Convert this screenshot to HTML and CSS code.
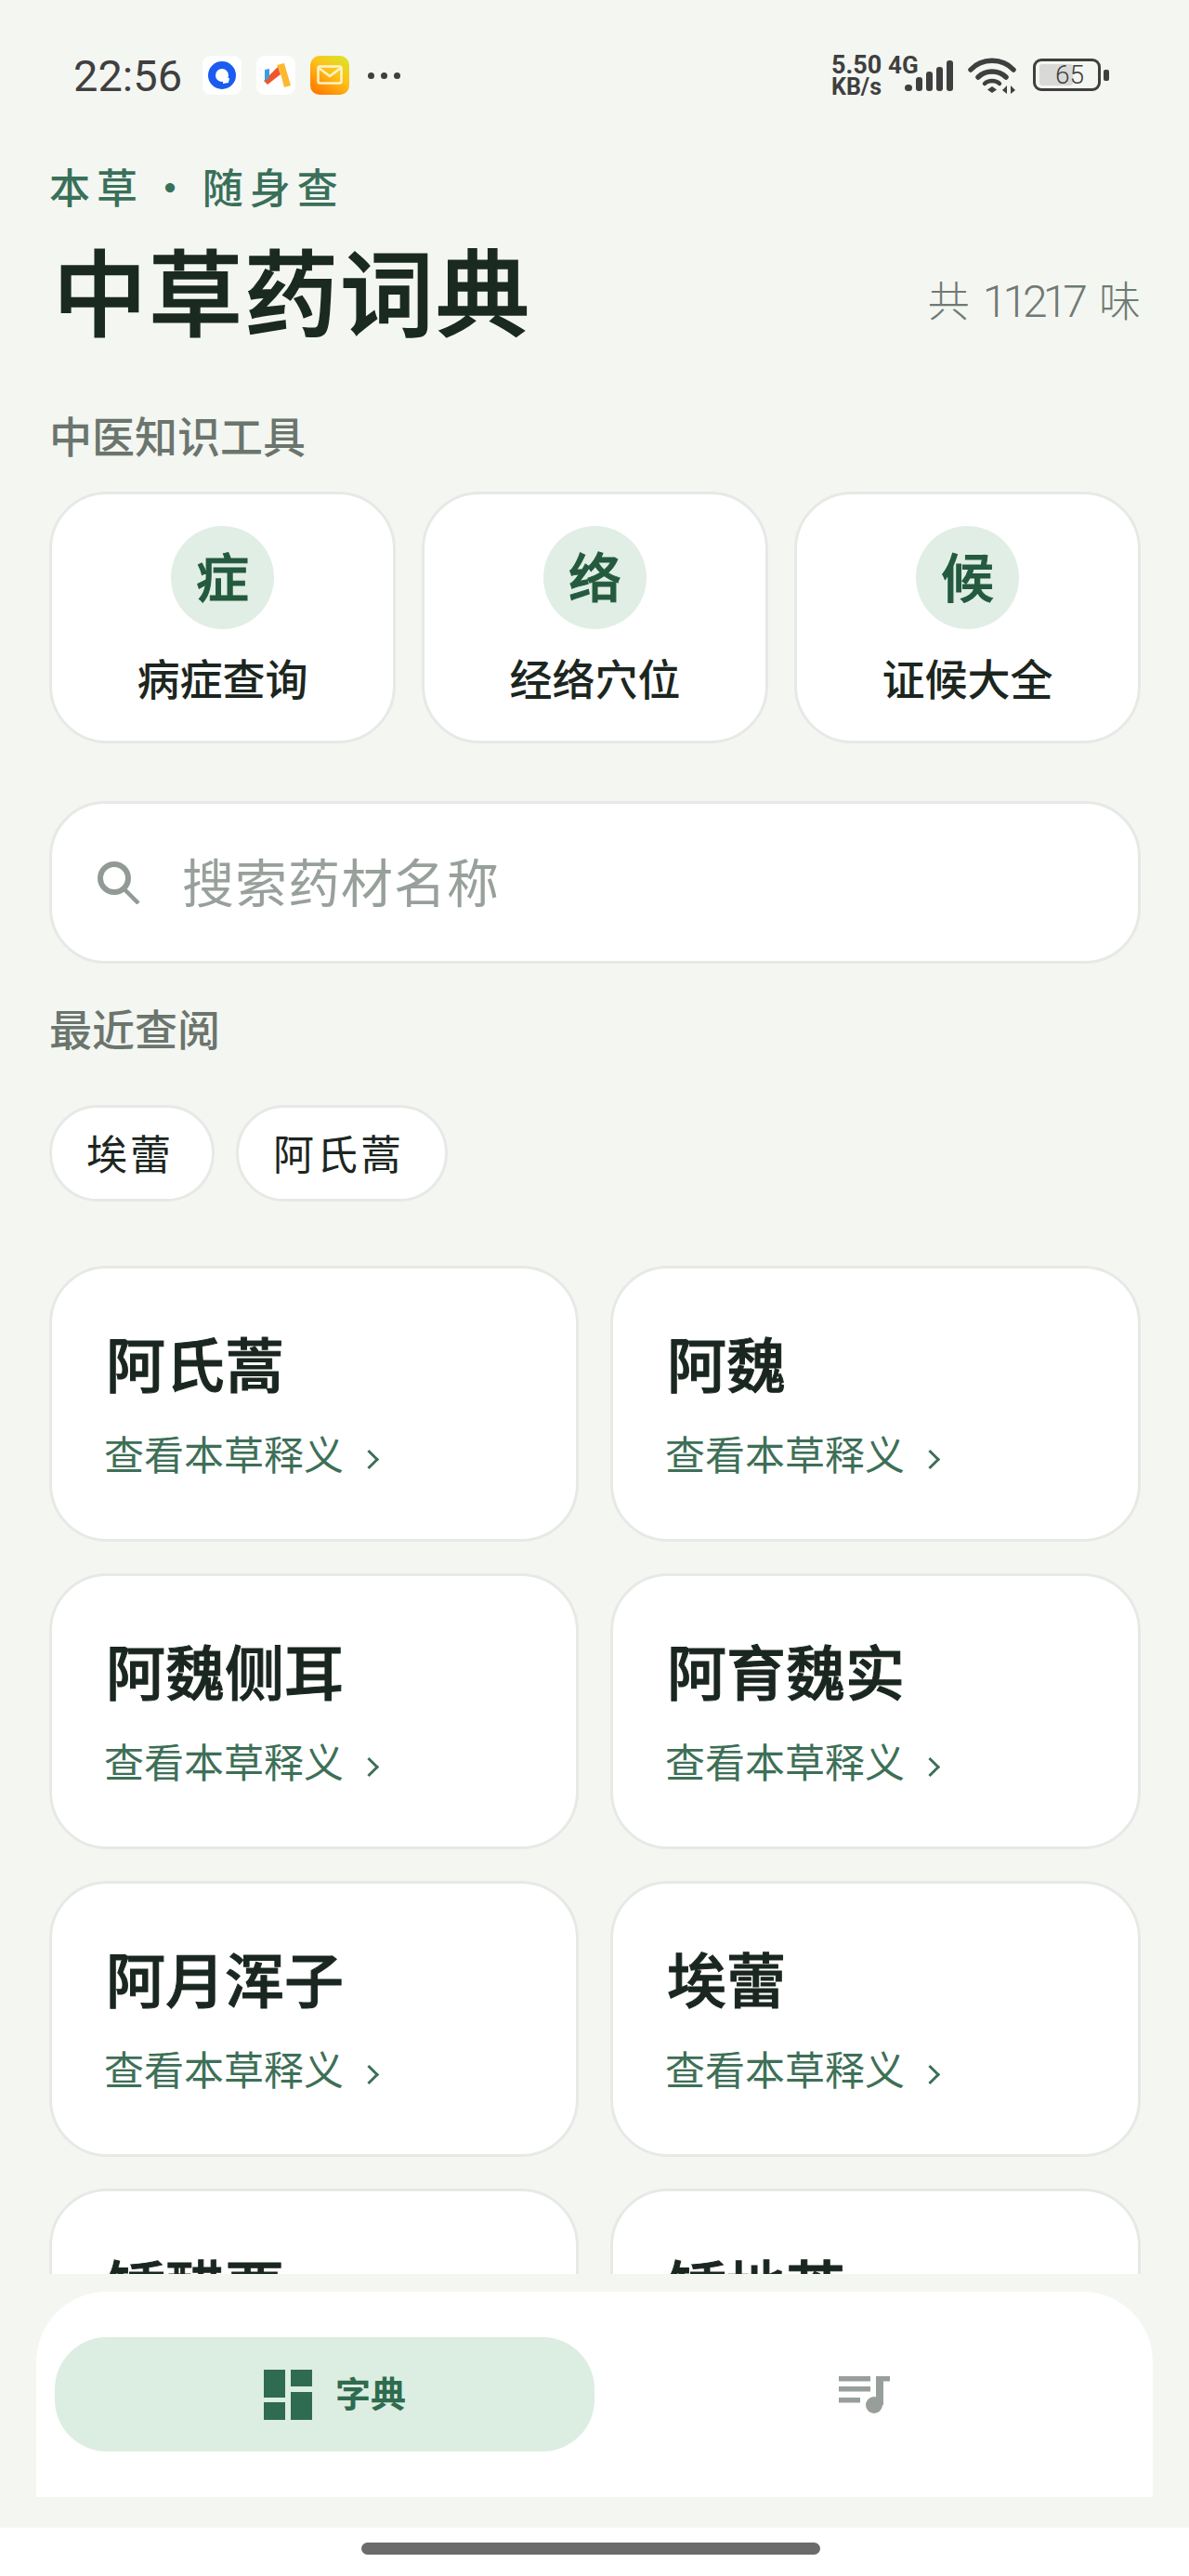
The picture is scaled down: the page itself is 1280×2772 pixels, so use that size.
FILE: index.html
```html
<!DOCTYPE HTML>
<html>

<head>
    <meta name="viewport" content="width=device-width, initial-scale=1">
    <title>中草药词典</title>
    <link rel="stylesheet" href="styles.css">
</head>

<body>
    <div class="statusBar">
        <div class="statusLeft">
            <span class="clock">22:56</span>
            <svg class="appIcon" viewBox="0 0 42 42">
                <rect width="42" height="42" rx="9" fill="#fff" />
                <circle cx="21" cy="21" r="15" fill="#1a5cf0" />
                <circle cx="21" cy="21" r="7" fill="#fff" />
                <path d="M22 24l7 0-1 5-6 1z" fill="#fff" />
            </svg>
            <svg class="appIcon" viewBox="0 0 42 42">
                <rect width="42" height="42" rx="9" fill="#fff" />
                <path d="M22 10l8-2 7 24-7 2-4-15z" fill="#fdb92e" />
                <path d="M8 27l15-15 3 8-14 11z" fill="#f0562a" />
                <path d="M9 15l5-1 0 9-5 5z" fill="#3b9ede" />
            </svg>
            <svg class="appIcon" viewBox="0 0 42 42">
                <defs>
                    <linearGradient id="mailFill" x1="0.9" y1="0" x2="0.2" y2="1">
                        <stop offset="0" stop-color="#d8e52a" />
                        <stop offset="0.45" stop-color="#fdc21a" />
                        <stop offset="1" stop-color="#ff7a00" />
                    </linearGradient>
                </defs>
                <rect width="42" height="42" rx="10" fill="url(#mailFill)" />
                <rect x="8.5" y="11.5" width="25" height="18" rx="2" fill="none" stroke="#fff4c8" stroke-width="2.5" />
                <path d="M9 13l12 9 12-9" fill="none" stroke="#fff4c8" stroke-width="2.5" />
            </svg>
            <span class="moreDots"><i></i><i></i><i></i></span>
        </div>
        <div class="statusRight">
            <div class="netSpeed">
                <span>5.50</span>
                <span class="netUnit">KB/s</span>
            </div>
            <div class="signal">
                <span class="netType">4G</span>
                <svg class="signalBars" viewBox="0 0 52 34">
                    <rect x="0" y="26" width="8" height="7" rx="3.5" fill="#3f3f3f" />
                    <rect x="12" y="18" width="7" height="15" rx="3" fill="#3f3f3f" />
                    <rect x="23" y="12" width="7" height="21" rx="3" fill="#3f3f3f" />
                    <rect x="34" y="7" width="7" height="26" rx="3" fill="#3f3f3f" />
                    <rect x="45" y="0" width="7" height="33" rx="3" fill="#3f3f3f" />
                </svg>
            </div>
            <svg class="wifi" viewBox="0 0 52 39">
                <path d="M3 13C15 0 37 0 49 13" fill="none" stroke="#3f3f3f" stroke-width="5.500" stroke-linecap="round" />
                <path d="M11 21C19 13 33 13 41 21" fill="none" stroke="#3f3f3f" stroke-width="5.500" stroke-linecap="round" />
                <path d="M18 28C22 24 30 24 34 28" fill="none" stroke="#3f3f3f" stroke-width="4.500" stroke-linecap="round" />
                <path d="M26 31l5 3.500-5 3.500-5-3.500z" fill="#3f3f3f" />
                <path d="M42 30v9l-5-4zM46 30v9l5-4z" fill="#3f3f3f" />
            </svg>
            <div class="battery">
                <div class="batteryBody">
                    <div class="batteryFill"></div>
                    <span class="batteryText">65</span>
                </div>
                <div class="batteryTip"></div>
            </div>
        </div>
    </div>

    <div class="page">
        <p class="eyebrow">本草 · 随身查</p>
        <div class="titleRow">
            <h1>中草药词典</h1>
            <span class="total">共<span class="totalNum">11217</span>味</span>
        </div>

        <p class="sectionTitle">中医知识工具</p>
        <div class="toolRow">
            <div class="toolCard">
                <div class="toolBadge">症</div>
                <div class="toolName">病症查询</div>
            </div>
            <div class="toolCard">
                <div class="toolBadge">络</div>
                <div class="toolName">经络穴位</div>
            </div>
            <div class="toolCard">
                <div class="toolBadge">候</div>
                <div class="toolName">证候大全</div>
            </div>
        </div>

        <div class="searchBox">
            <svg class="searchIcon" viewBox="0 0 46 46">
                <circle cx="18" cy="18" r="15" fill="none" stroke="#919a94" stroke-width="6" />
                <path d="M29 30l15 15" fill="none" stroke="#919a94" stroke-width="4.500" />
            </svg>
            <span class="searchHint">搜索药材名称</span>
        </div>

        <p class="recentTitle">最近查阅</p>
        <div class="chipRow">
            <div class="chip">埃蕾</div>
            <div class="chip">阿氏蒿</div>
        </div>

        <div class="herbViewport">
            <div class="herbGrid">
                <div class="herbCard">
                    <div class="herbName">阿氏蒿</div>
                    <div class="herbLink">查看本草释义<i class="chevron"></i></div>
                </div>
                <div class="herbCard">
                    <div class="herbName">阿魏</div>
                    <div class="herbLink">查看本草释义<i class="chevron"></i></div>
                </div>
                <div class="herbCard">
                    <div class="herbName">阿魏侧耳</div>
                    <div class="herbLink">查看本草释义<i class="chevron"></i></div>
                </div>
                <div class="herbCard">
                    <div class="herbName">阿育魏实</div>
                    <div class="herbLink">查看本草释义<i class="chevron"></i></div>
                </div>
                <div class="herbCard">
                    <div class="herbName">阿月浑子</div>
                    <div class="herbLink">查看本草释义<i class="chevron"></i></div>
                </div>
                <div class="herbCard">
                    <div class="herbName">埃蕾</div>
                    <div class="herbLink">查看本草释义<i class="chevron"></i></div>
                </div>
                <div class="herbCard">
                    <div class="herbName">矮醋栗</div>
                    <div class="herbLink">查看本草释义<i class="chevron"></i></div>
                </div>
                <div class="herbCard">
                    <div class="herbName">矮地茶</div>
                    <div class="herbLink">查看本草释义<i class="chevron"></i></div>
                </div>
            </div>
        </div>
    </div>

    <div class="tabBar">
        <div class="tab tabActive">
            <svg class="tabGridIcon" viewBox="0 0 52 54">
                <rect x="0" y="0" width="23" height="30" fill="#2f6b4f" />
                <rect x="0" y="35" width="23" height="19" fill="#2f6b4f" />
                <rect x="29" y="0" width="23" height="18" fill="#2f6b4f" />
                <rect x="29" y="24" width="23" height="30" fill="#2f6b4f" />
            </svg>
            <span class="tabLabel">字典</span>
        </div>
        <div class="tab">
            <svg class="tabMusicIcon" viewBox="0 0 55 41">
                <rect x="0" y="1" width="34" height="5.500" fill="#989f9b" />
                <rect x="0" y="12" width="34" height="5.500" fill="#989f9b" />
                <rect x="0" y="24" width="23" height="5.500" fill="#989f9b" />
                <path d="M40 1h15v5.500h-7v25.500h-8z" fill="#989f9b" />
                <circle cx="38" cy="32" r="9" fill="#989f9b" />
            </svg>
        </div>
    </div>

    <div class="gestureArea">
        <div class="homeBar"></div>
    </div>
</body>

</html>
```

FILE: styles.css
```css
html {
    font-family: "Noto Sans CJK SC", "Noto Sans", sans-serif;
}

body {
    margin: 0;
    width: 1280px;
    height: 2772px;
    overflow: hidden;
    background: #f4f6f2;
    color: #1c2620;
}

p {
    margin: 0;
}

/* Status bar */
.statusBar {
    height: 160px;
    padding: 60px 86px 0 79px;
    box-sizing: border-box;
    display: flex;
    justify-content: space-between;
    align-items: flex-start;
    color: #3f3f3f;
}

.statusLeft {
    display: flex;
    align-items: center;
    height: 42px;
}

.clock {
    font-family: Roboto, sans-serif;
    font-size: 47px;
    width: 139px;
}

.appIcon {
    width: 42px;
    height: 42px;
    margin-right: 16px;
}

.moreDots {
    display: flex;
    gap: 7px;
    margin-left: 4px;
}

.moreDots i {
    width: 7px;
    height: 7px;
    border-radius: 50%;
    background: #3f3f3f;
}

.statusRight {
    display: flex;
    align-items: flex-start;
}

.netSpeed {
    display: flex;
    flex-direction: column;
    font-family: Roboto, sans-serif;
    font-size: 27px;
    font-weight: 700;
    line-height: 23px;
    margin-top: -1px;
    width: 61px;
}

.netUnit {
    font-size: 25px;
}

.signal {
    position: relative;
    width: 52px;
    height: 34px;
    margin-left: 18px;
    margin-top: 5px;
}

.netType {
    position: absolute;
    left: -18px;
    top: -8px;
    font-family: Roboto, sans-serif;
    font-size: 26px;
    font-weight: 700;
    line-height: 26px;
}

.signalBars {
    display: block;
    width: 52px;
    height: 34px;
}

.wifi {
    width: 52px;
    height: 39px;
    margin-left: 16px;
    margin-top: 2px;
}

.battery {
    display: flex;
    align-items: center;
    margin-left: 18px;
    margin-top: 3px;
}

.batteryBody {
    position: relative;
    width: 73px;
    height: 35px;
    box-sizing: border-box;
    border: 3px solid #3f3f3f;
    border-radius: 9px;
    display: flex;
    align-items: center;
    justify-content: center;
}

.batteryFill {
    position: absolute;
    left: 4px;
    top: 3px;
    bottom: 3px;
    width: 36px;
    background: #d9dad8;
    border-radius: 3px;
}

.batteryText {
    position: relative;
    font-family: Roboto, sans-serif;
    font-size: 28px;
    font-weight: 300;
    line-height: 30px;
    margin-left: 6px;
}

.batteryTip {
    width: 6px;
    height: 12px;
    margin-left: 3px;
    background: #3f3f3f;
    border-radius: 2px;
}

/* Main page */
.page {
    padding: 0 52px 0 53px;
}

.eyebrow {
    font-size: 44px;
    font-weight: 500;
    line-height: 62px;
    letter-spacing: 7px;
    word-spacing: -11px;
    color: #39705a;
    margin-top: 9px;
}

.titleRow {
    display: flex;
    justify-content: space-between;
    align-items: center;
    margin-top: 19px;
    padding-left: 4px;
}

h1 {
    margin: 0;
    font-size: 101px;
    font-weight: 500;
    line-height: 120px;
    letter-spacing: 2px;
    -webkit-text-stroke: 1.5px #1a2a20;
    color: #1a2a20;
}

.total {
    font-size: 45px;
    font-weight: 300;
    color: #6f7a72;
    line-height: 60px;
    margin: 27px 0 0 0;
}

.totalNum {
    font-family: Roboto, sans-serif;
    font-size: 48px;
    letter-spacing: -5px;
    margin: 0 17px 0 14px;
}

.sectionTitle {
    font-size: 46px;
    font-weight: 500;
    line-height: 60px;
    color: #6b756d;
    margin-top: 67px;
}

.toolRow {
    display: grid;
    grid-template-columns: 1fr 1fr 1fr;
    gap: 28px;
    margin-top: 32px;
}

.toolCard {
    height: 271px;
    box-sizing: border-box;
    background: #fff;
    border: 3px solid #e6e9e5;
    border-radius: 62px;
    padding-top: 34px;
    display: flex;
    flex-direction: column;
    align-items: center;
}

.toolBadge {
    width: 111px;
    height: 111px;
    border-radius: 50%;
    background: #e1eee5;
    color: #245a3e;
    font-size: 57px;
    font-weight: 500;
    -webkit-text-stroke: 1px #245a3e;
    line-height: 105px;
    text-align: center;
}

.toolName {
    font-size: 46px;
    font-weight: 500;
    line-height: 60px;
    margin-top: 21px;
}

.searchBox {
    height: 175px;
    box-sizing: border-box;
    margin-top: 62px;
    background: #fff;
    border: 3px solid #e6e9e5;
    border-radius: 60px;
    display: flex;
    align-items: center;
    padding-left: 49px;
}

.searchIcon {
    width: 46px;
    height: 46px;
}

.searchHint {
    font-size: 56px;
    font-weight: 400;
    letter-spacing: 1px;
    color: #98a09b;
    margin: 0 0 7px 45px;
}

.recentTitle {
    font-size: 46px;
    font-weight: 500;
    line-height: 60px;
    color: #6b756d;
    margin-top: 38px;
}

.chipRow {
    display: flex;
    gap: 23px;
    margin-top: 54px;
}

.chip {
    height: 104px;
    box-sizing: border-box;
    background: #fff;
    border: 3px solid #e6e9e5;
    border-radius: 52px;
    padding: 0 41px 0 37px;
    font-size: 44px;
    font-weight: 400;
    letter-spacing: 3px;
    line-height: 96px;
}

.chip:last-child {
    padding-right: 44px;
}

/* Stops above the tab bar, the last row is cut off here */
.herbViewport {
    height: 1085px;
    margin-top: 69px;
    overflow: hidden;
}

.herbGrid {
    display: grid;
    grid-template-columns: 570px 571px;
    column-gap: 34px;
    row-gap: 34px;
}

.herbCard {
    height: 297px;
    box-sizing: border-box;
    background: #fff;
    border: 3px solid #e6e9e5;
    border-radius: 62px;
    padding: 62px 0 0 56px;
}

.herbName {
    font-size: 64px;
    font-weight: 500;
    -webkit-text-stroke: 1px #1a2620;
    line-height: 76px;
    color: #1a2620;
    padding-left: 2px;
}

.herbLink {
    display: flex;
    align-items: center;
    font-size: 43px;
    font-weight: 400;
    line-height: 56px;
    color: #3e6f57;
    margin-top: 32px;
}

.chevron {
    width: 15px;
    height: 15px;
    box-sizing: border-box;
    border-top: 3.5px solid #3e6f57;
    border-right: 3.5px solid #3e6f57;
    margin-left: 20px;
    transform: translateY(7px) rotate(45deg);
}

/* Tab bar */
.tabBar {
    position: absolute;
    left: 39px;
    top: 2466px;
    width: 1202px;
    height: 221px;
    background: #fff;
    border-radius: 76px 76px 0 0;
    display: flex;
    padding: 49px 20px 0;
    box-sizing: border-box;
}

.tab {
    width: 581px;
    height: 123px;
    border-radius: 56px;
    display: flex;
    align-items: center;
    justify-content: center;
}

.tabActive {
    background: #dcede2;
    padding-left: 22px;
    box-sizing: border-box;
}

.tabGridIcon {
    width: 52px;
    height: 54px;
}

.tabLabel {
    font-size: 38px;
    font-weight: 700;
    color: #2f6b4f;
    margin: 0 0 7px 25px;
}

.tabMusicIcon {
    width: 55px;
    height: 41px;
}

.gestureArea {
    position: absolute;
    left: 0;
    top: 2720px;
    width: 1280px;
    height: 52px;
    background: #fff;
}

.homeBar {
    width: 494px;
    height: 13px;
    margin: 16px 0 0 389px;
    background: #6b6b6b;
    border-radius: 7px;
}
```
